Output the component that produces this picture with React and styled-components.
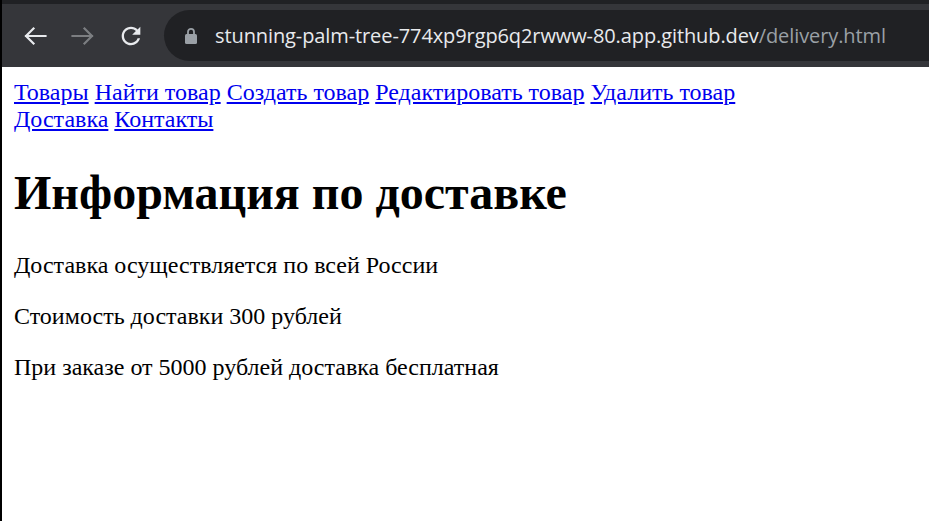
import React from "react";
import styled, { createGlobalStyle } from "styled-components";

const Global = createGlobalStyle`
  html, body { margin: 0; padding: 0; height: 100%; background: #fff; }
  #root { height: 100%; }
`;

const Window = styled.div`
  display: flex;
  flex-direction: column;
  height: 521px;
  border-left: 2px solid #000;
  box-sizing: border-box;
  overflow: hidden;
`;

const TopStrip = styled.div`
  height: 4px;
  background: #202124;
  flex-shrink: 0;
`;

const Toolbar = styled.div`
  height: 63px;
  flex-shrink: 0;
  background: #35363a;
  display: flex;
  align-items: center;
  padding-left: 13px;
  gap: 8px;
`;

const NavButton = styled.div`
  width: 40px;
  height: 40px;
  display: flex;
  align-items: center;
  justify-content: center;
  color: ${(p) => (p.$disabled ? "#7c7e81" : "#e8eaed")};
`;

const Omnibox = styled.div`
  flex: 1;
  height: 51px;
  margin-left: 5px;
  margin-right: -40px;
  border-radius: 26px;
  background: #202124;
  display: flex;
  align-items: center;
  padding-left: 21px;
  gap: 18px;
`;

const Url = styled.div`
  font-family: "Open Sans", "Noto Sans", sans-serif;
  font-size: 20px;
  color: #e8eaed;
  white-space: nowrap;
  letter-spacing: -0.1px;
  padding-bottom: 1px;
`;

const UrlPath = styled.span`
  color: #9aa0a6;
`;

const Page = styled.div`
  flex: 1;
  background: #fff;
  padding: 12px;
  font-family: "Liberation Serif", "Times New Roman", serif;
  font-size: 24px;
  color: #000;
`;

const NavLine = styled.div``;

const Link = styled.a`
  color: #0000ee;
  text-decoration: underline;
`;

const Title = styled.h1`
  font-size: 48px;
  font-weight: bold;
  margin: 32px 0;
`;

const Para = styled.p`
  margin: 24px 0;
`;

const BackIcon = () => (
  <svg width="24" height="20" viewBox="0 0 24 20" fill="none">
    <path d="M22.5 10H3 M10.5 2.5 L3 10 L10.5 17.5" stroke="currentColor" strokeWidth="2.2" strokeLinecap="square" />
  </svg>
);

const ForwardIcon = () => (
  <svg width="24" height="20" viewBox="0 0 24 20" fill="none">
    <path d="M1.5 10H21 M13.5 2.5 L21 10 L13.5 17.5" stroke="currentColor" strokeWidth="2.2" strokeLinecap="square" />
  </svg>
);

const ReloadIcon = () => (
  <svg width="28" height="28" viewBox="0 0 24 24">
    <path
      fill="currentColor"
      d="M17.65 6.35C16.2 4.9 14.21 4 12 4c-4.42 0-7.990 3.58-7.99 8s3.57 8 7.99 8c3.73 0 6.84-2.55 7.73-6h-2.08c-.82 2.33-3.04 4-5.65 4-3.31 0-6-2.69-6-6s2.690-6 6-6c1.66 0 3.14.69 4.22 1.78L13 11h7V4l-2.35 2.35z"
    />
  </svg>
);

const LockIcon = () => (
  <svg width="12" height="17" viewBox="0 0 12 17">
    <path d="M3 7V4.8a3 3 0 0 1 6 0V7" fill="none" stroke="#9aa0a6" strokeWidth="1.8" />
    <rect x="0" y="7" width="12" height="10" rx="1.5" fill="#9aa0a6" />
  </svg>
);

export default function App() {
  return (
    <>
      <Global />
      <Window>
        <TopStrip />
        <Toolbar>
          <NavButton><BackIcon /></NavButton>
          <NavButton $disabled><ForwardIcon /></NavButton>
          <NavButton><ReloadIcon /></NavButton>
          <Omnibox>
            <LockIcon />
            <Url>
              stunning-palm-tree-774xp9rgp6q2rwww-80.app.github.dev
              <UrlPath>/delivery.html</UrlPath>
            </Url>
          </Omnibox>
        </Toolbar>
        <Page>
          <NavLine>
            <Link href="#">Товары</Link> <Link href="#">Найти товар</Link>{" "}
            <Link href="#">Создать товар</Link>{" "}
            <Link href="#">Редактировать товар</Link>{" "}
            <Link href="#">Удалить товар</Link>
          </NavLine>
          <NavLine>
            <Link href="#">Доставка</Link> <Link href="#">Контакты</Link>
          </NavLine>
          <Title>Информация по доставке</Title>
          <Para>Доставка осуществляется по всей России</Para>
          <Para>Стоимость доставки 300 рублей</Para>
          <Para>При заказе от 5000 рублей доставка бесплатная</Para>
        </Page>
      </Window>
    </>
  );
}
